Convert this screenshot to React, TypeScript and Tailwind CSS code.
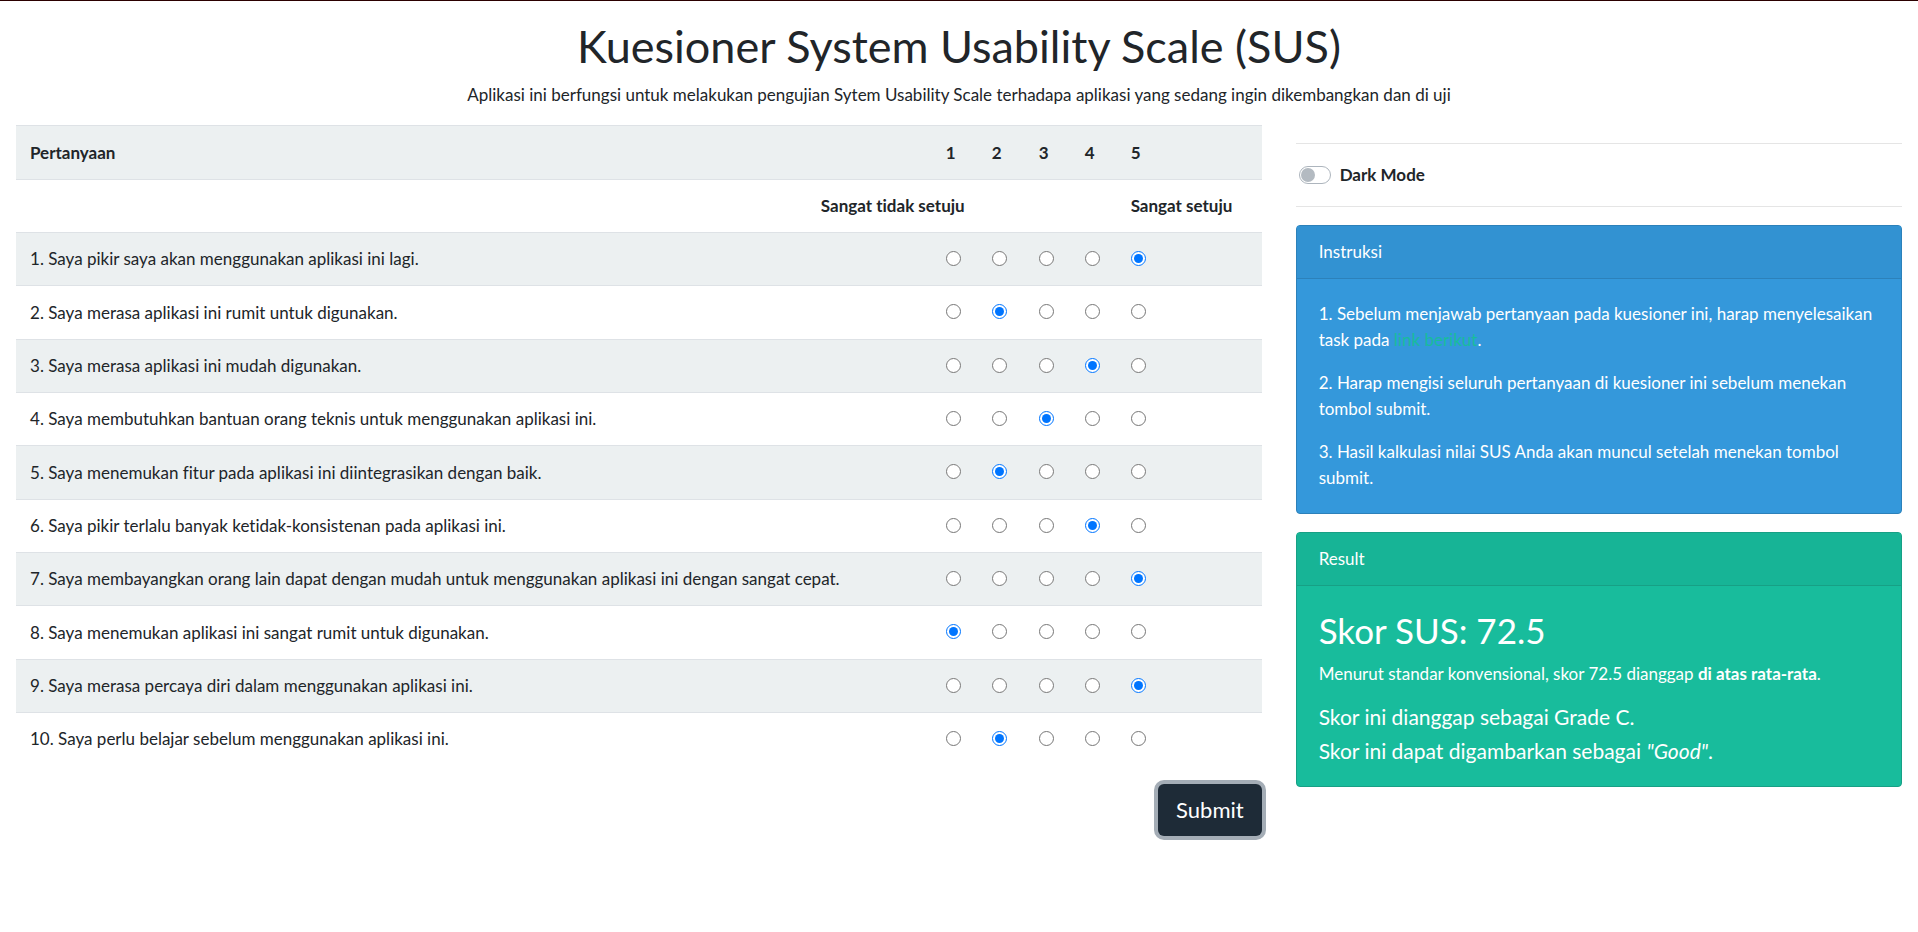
import { useState } from "react";

const questions = [
  "Saya pikir saya akan menggunakan aplikasi ini lagi.",
  "Saya merasa aplikasi ini rumit untuk digunakan.",
  "Saya merasa aplikasi ini mudah digunakan.",
  "Saya membutuhkan bantuan orang teknis untuk menggunakan aplikasi ini.",
  "Saya menemukan fitur pada aplikasi ini diintegrasikan dengan baik.",
  "Saya pikir terlalu banyak ketidak-konsistenan pada aplikasi ini.",
  "Saya membayangkan orang lain dapat dengan mudah untuk menggunakan aplikasi ini dengan sangat cepat.",
  "Saya menemukan aplikasi ini sangat rumit untuk digunakan.",
  "Saya merasa percaya diri dalam menggunakan aplikasi ini.",
  "Saya perlu belajar sebelum menggunakan aplikasi ini.",
];

const scale = [1, 2, 3, 4, 5];

function QuestionTable() {
  const [answers, setAnswers] = useState([5, 2, 4, 3, 2, 4, 5, 1, 5, 2]);

  return (
    <table className="w-full table-fixed border-collapse">
      <colgroup>
        <col />
        <col className="w-[46px]" />
        <col className="w-[47px]" />
        <col className="w-[46px]" />
        <col className="w-[46px]" />
        <col className="w-36" />
      </colgroup>
      <thead className="text-left">
        <tr className="h-[54px] border-y border-[#dee2e6] bg-[#ecf0f1]">
          <th className="px-3.5 font-bold">Pertanyaan</th>
          {scale.map((n) => (
            <th key={n} className="pl-[13px] font-bold">
              {n}
            </th>
          ))}
        </tr>
        <tr className="h-[53px]">
          <th colSpan={2} className="px-3.5 text-right font-bold">
            Sangat tidak setuju
          </th>
          <td colSpan={3} />
          <th className="pl-[13px] font-bold">Sangat setuju</th>
        </tr>
      </thead>
      <tbody>
        {questions.map((question, i) => (
          <tr
            key={question}
            className="h-[53px] border-t border-[#dee2e6] odd:bg-[#ecf0f1] nth-[3n+2]:h-[54px]"
          >
            <td className="px-3.5">
              {i + 1}. {question}
            </td>
            {scale.map((n) => (
              <td key={n} className="pb-0.5 pl-[13px]">
                <input
                  type="radio"
                  name={`q${i + 1}`}
                  aria-label={`${i + 1}. ${n}`}
                  checked={answers[i] === n}
                  onChange={() => setAnswers(answers.map((a, k) => (k === i ? n : a)))}
                  className="block size-[15px]"
                />
              </td>
            ))}
          </tr>
        ))}
      </tbody>
    </table>
  );
}

export default function App() {
  const [dark, setDark] = useState(false);

  return (
    <div className="border-t border-[#2b0000] bg-white pb-8 font-[Lato,sans-serif] text-[17px] leading-[26px] text-[#212529] [font-variant-ligatures:none]">
      <header className="px-4 pt-[19px] pb-[17px] text-center">
        <h1 className="mb-[9px] text-[45px] leading-[53px]">Kuesioner System Usability Scale (SUS)</h1>
        <p>
          Aplikasi ini berfungsi untuk melakukan pengujian Sytem Usability Scale terhadapa aplikasi yang
          sedang ingin dikembangkan dan di uji
        </p>
      </header>

      <main className="grid grid-cols-3 items-start">
        <form className="col-span-2 pr-[17px] pl-4" onSubmit={(e) => e.preventDefault()}>
          <QuestionTable />
          <div className="mt-[18px] flex justify-end">
            <button
              type="submit"
              className="h-[52px] rounded-md bg-[#1e2b37] px-[18px] text-[22px] text-white ring-4 ring-[#a4adb6]"
            >
              Submit
            </button>
          </div>
        </form>

        <aside className="pt-[18px] pr-4 pl-[17px]">
          <div className="mb-[18px] flex h-16 items-center border-y border-[#e5e5e5] pl-[3px]">
            <label className="flex items-center gap-[9px] font-bold">
              <input
                type="checkbox"
                role="switch"
                checked={dark}
                onChange={() => setDark(!dark)}
                className="h-[18px] w-8 appearance-none rounded-full border border-[#adb5bd] bg-white p-px before:block before:size-3.5 before:rounded-full before:bg-[#b3bac1] checked:before:ml-3.5"
              />
              Dark Mode
            </label>
          </div>

          <section className="mb-[18px] rounded border border-[#2c81ba] bg-[#3498db] text-white">
            <h2 className="border-b border-[#2c81ba] bg-[#3292d2] px-[22px] py-[13px]">Instruksi</h2>
            <div className="flex flex-col gap-[17px] p-[22px]">
              <p>
                1. Sebelum menjawab pertanyaan pada kuesioner ini, harap menyelesaikan task pada{" "}
                <a href="#task" className="text-[#18bc9c]">
                  link berikut
                </a>
                .
              </p>
              <p>2. Harap mengisi seluruh pertanyaan di kuesioner ini sebelum menekan tombol submit.</p>
              <p>3. Hasil kalkulasi nilai SUS Anda akan muncul setelah menekan tombol submit.</p>
            </div>
          </section>

          <section className="rounded border border-[#17a085] bg-[#18bc9c] text-white">
            <h2 className="border-b border-[#17a085] bg-[#17b496] px-[22px] py-[13px]">Result</h2>
            <div className="p-[22px]">
              <h3 className="mb-[9px] text-[35px] leading-[44px]">Skor SUS: 72.5</h3>
              <p className="mb-[17px]">
                Menurut standar konvensional, skor 72.5 dianggap <b>di atas rata-rata</b>.
              </p>
              <p className="mb-2 text-[21px]">Skor ini dianggap sebagai Grade C.</p>
              <p className="text-[21px]">
                Skor ini dapat digambarkan sebagai <i>"Good"</i>.
              </p>
            </div>
          </section>
        </aside>
      </main>
    </div>
  );
}
